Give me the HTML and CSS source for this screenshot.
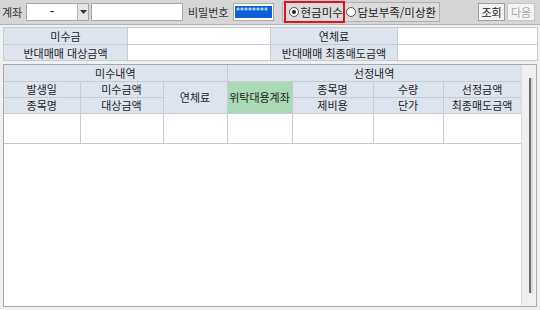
FILE: index.html
```html
<!DOCTYPE html>
<html lang="ko">
<head>
<meta charset="utf-8">
<link rel="stylesheet" href="styles.css">
</head>
<body>
<div class="toolbar">
  <span class="lbl lbl-acct">계좌</span>
  <div class="combo">
    <div class="combo-field">-</div>
    <div class="combo-btn"><svg width="7" height="4" viewBox="0 0 7 4"><path d="M0 0h7L3.5 4z" fill="#333"/></svg></div>
  </div>
  <div class="field field-name"></div>
  <span class="lbl lbl-pw">비밀번호</span>
  <div class="field field-pw"><span class="pw-sel">********</span></div>
  <div class="radio-group">
    <label class="radio radio-on"><span class="dot"><span class="dot-in"></span></span>현금미수</label>
    <label class="radio"><span class="dot"></span>담보부족/미상환</label>
  </div>
  <div class="btns">
    <button class="btn">조회</button>
    <button class="btn btn-off">다음</button>
  </div>
</div>

<table class="info">
  <colgroup><col class="ic1"><col class="ic2"><col class="ic3"><col></colgroup>
  <tr><th>미수금</th><td></td><th>연체료</th><td></td></tr>
  <tr><th>반대매매 대상금액</th><td></td><th>반대매매 최종매도금액</th><td></td></tr>
</table>

<div class="grid">
  <div class="grid-main">
    <table class="gt">
      <colgroup>
        <col class="g1"><col class="g2"><col class="g3"><col class="g4"><col class="g5"><col class="g6"><col class="g7">
      </colgroup>
      <tr class="hr"><th colspan="3">미수내역</th><th colspan="4">선정내역</th></tr>
      <tr class="hr"><th>발생일</th><th>미수금액</th><th rowspan="2">연체료</th><th rowspan="2" class="green">위탁대용계좌</th><th>종목명</th><th>수량</th><th>선정금액</th></tr>
      <tr class="hr"><th>종목명</th><th>대상금액</th><th>제비용</th><th>단가</th><th>최종매도금액</th></tr>
      <tr class="dr"><td></td><td></td><td></td><td></td><td></td><td></td><td></td></tr>
    </table>
  </div>
  <div class="vscroll"><div class="thumb"></div></div>
</div>
</body>
</html>
```

FILE: styles.css
```css
* { box-sizing: border-box; }
html, body { margin: 0; padding: 0; }
body {
  width: 540px;
  height: 310px;
  background: #f0f0f0;
  font-family: "Noto Sans CJK KR", "Noto Sans", sans-serif;
  font-size: 11px;
  color: #1e1e1e;
  overflow: hidden;
}

.toolbar {
  height: 25px;
  background: #d6d6d6;
  border-bottom: 1px solid #b4b4b4;
  display: flex;
  align-items: center;
  padding: 0 5px 0 2px;
}
.lbl { line-height: 14px; white-space: nowrap; color: #333; }
.lbl-acct { width: 20px; margin-right: 4px; }
.combo {
  display: flex;
  height: 18px;
  width: 63px;
  background: #fff;
  border: 1px solid #a8a8a8;
}
.combo-field {
  flex: 1;
  text-align: center;
  line-height: 15px;
  font-weight: bold;
}
.combo-btn {
  width: 11px;
  background: #e4e4e4;
  border-left: 1px solid #b8b8b8;
  display: flex;
  align-items: center;
  justify-content: center;
}
.field {
  height: 18px;
  background: #fff;
  border: 1px solid #a8a8a8;
}
.field-name { width: 92px; margin-left: 2px; }
.lbl-pw { margin-left: 5px; margin-right: 5px; }
.field-pw { width: 41px; padding: 2px 1px; display: flex; }
.pw-sel {
  flex: 1;
  background: #0a5fd6;
  color: #fff;
  font-family: "DejaVu Sans Mono", monospace;
  font-size: 8px;
  line-height: 12px;
  letter-spacing: -0.8px;
  overflow: hidden;
  white-space: nowrap;
}
.radio-group {
  margin-left: 8px;
  height: 20px;
  width: 158px;
  display: flex;
  align-items: center;
  border: 1px solid #b0b0b0;
  background: #dcdcdc;
}
.radio {
  display: flex;
  align-items: center;
  height: 22px;
  white-space: nowrap;
  color: #222;
  font-size: 11.5px;
}
.radio-on {
  width: 61px;
  margin-left: 1px;
  border: 2px solid #e8101a;
  padding-left: 3px;
}
.radio + .radio { margin-left: 1px; }
.dot {
  width: 10px;
  height: 10px;
  border-radius: 50%;
  border: 1px solid #555;
  background: #fff;
  margin-right: 1px;
  display: flex;
  align-items: center;
  justify-content: center;
}
.dot-in { width: 4px; height: 4px; border-radius: 50%; background: #222; }
.btns { margin-left: auto; display: flex; gap: 2px; }
.btn {
  font-family: inherit;
  font-size: 11px;
  height: 18px;
  padding: 0;
  width: 27px;
  background: #f4f4f4;
  border: 1px solid #a0a0a0;
  color: #222;
  line-height: 14px;
}
.btn-off { width: 28px; color: #a8a8a8; border-color: #c4c4c4; }

.info {
  margin: 2px 2px 0 3px;
  width: 535px;
  border-collapse: collapse;
  table-layout: fixed;
  background: #fff;
}
.info th, .info td {
  border: 1px solid #c6ccd4;
  height: 16px;
  padding: 0;
  line-height: 14px;
}
.info tr:first-child th, .info tr:first-child td { height: 17px; }
.info th { background: #dde4ee; font-weight: normal; color: #1e1e1e; }
.ic1 { width: 124px; }
.ic2 { width: 143px; }
.ic3 { width: 127px; }

.grid {
  margin: 3px 3px 0 3px;
  height: 243px;
  border: 1px solid #a8a8a8;
  background: #fff;
  display: flex;
}
.grid-main { width: 517px; }
.gt {
  width: 517px;
  border-collapse: collapse;
  table-layout: fixed;
}
.gt th, .gt td {
  border: 1px solid #c6ccd4;
  padding: 0;
  line-height: 14px;
}
.gt tr:first-child th { border-top: none; }
.gt th:first-child, .gt td:first-child { border-left: none; }
.gt th { background: #dde4ee; font-weight: normal; color: #1e1e1e; }
.gt .hr th { height: 16px; }
.gt .green { background: #a9dab4; }
.gt .dr td { height: 30px; }
.g1 { width: 76px; }
.g2 { width: 83px; }
.g3 { width: 64px; }
.g4 { width: 65px; }
.g5 { width: 81px; }
.g6 { width: 70px; }
.g7 { width: 78px; }

.vscroll {
  flex: 1;
  background: #f0f0f0;
  border-left: 1px solid #dcdcdc;
  padding: 13px 0 13px 7px;
}
.thumb {
  width: 4px;
  height: 100%;
  border-left: 2px solid #6e6e6e;
  background: #d8d8d8;
}
```
